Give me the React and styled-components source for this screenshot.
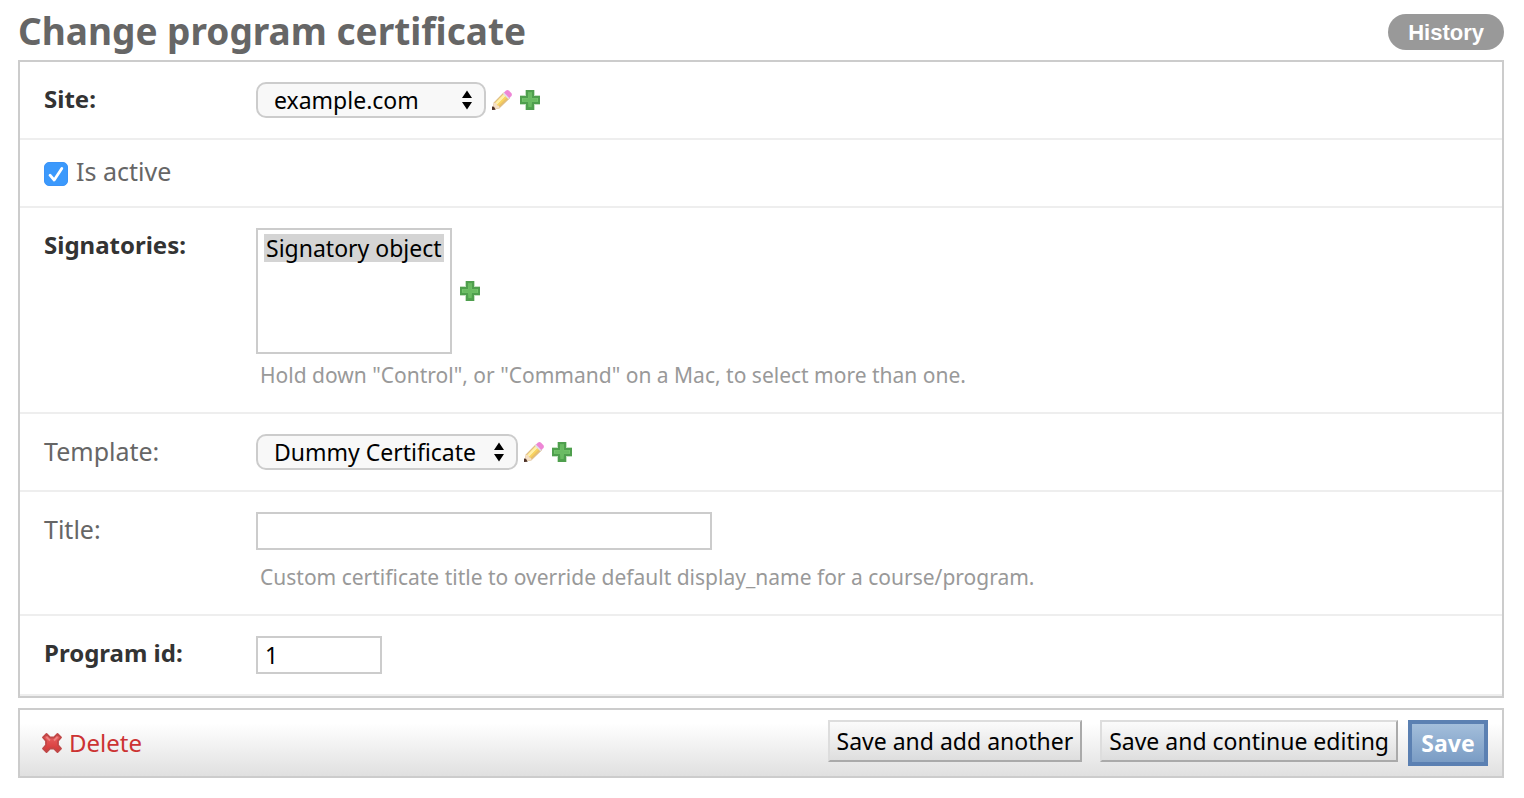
import React, { useState } from "react";
import styled, { createGlobalStyle, css } from "styled-components";

const GlobalStyle = createGlobalStyle`
  *, *::before, *::after { box-sizing: border-box; }
  body {
    margin: 0;
    background: #fff;
    color: #333;
    font-family: "Noto Sans", "Open Sans", sans-serif;
    font-size: 24px;
  }
  button, input, select { font-family: inherit; margin: 0; }
`;

const Page = styled.main`
  padding: 0 20px 20px 18px;
`;

const Header = styled.header`
  display: flex;
  justify-content: space-between;
  align-items: flex-start;
  height: 60px;
`;

const Heading = styled.h1`
  margin: 0;
  padding-top: 6px;
  font-size: 37px;
  line-height: 50px;
  font-weight: 700;
  color: #666;
`;

const HistoryLink = styled.a`
  margin-top: 14px;
  padding: 1px 20px 0;
  border-radius: 18px;
  background: #999;
  color: #fff;
  font-family: "Liberation Sans", Arial, sans-serif;
  font-size: 22px;
  line-height: 35px;
  font-weight: 700;
  text-decoration: none;
`;

const Module = styled.fieldset`
  margin: 0 0 10px;
  padding: 0;
  min-width: 0;
  border: 2px solid #ccc;
`;

const Row = styled.div`
  display: flex;
  align-items: flex-start;
  padding: 20px 24px;
  border-bottom: 2px solid #eee;
`;

const Label = styled.label`
  flex: 0 0 212px;
  font-size: ${(p) => (p.$required ? 24 : 25)}px;
  line-height: 34px;
  font-weight: ${(p) => (p.$required ? 700 : 400)};
  color: ${(p) => (p.$required ? "#333" : "#666")};
`;

const Field = styled.div`
  flex: 1;
  min-width: 0;
`;

const Controls = styled.div`
  display: flex;
  align-items: center;
`;

const IconLink = styled.a`
  display: block;
  width: 20px;
  height: 20px;
  margin-left: ${(p) => (p.$tight ? "6px" : "8px")};

  svg { display: block; }
`;

const Help = styled.p`
  margin: ${(p) => (p.$spaced ? "12px" : "6px")} 0 0;
  padding: 0 0 2px 4px;
  font-size: 21px;
  line-height: 30px;
  color: #999;
`;

const SelectBox = styled.div`
  position: relative;
  width: ${(p) => p.$width}px;

  svg {
    position: absolute;
    right: 13px;
    top: 8px;
    pointer-events: none;
  }
`;

const Select = styled.select`
  appearance: none;
  display: block;
  width: 100%;
  height: 36px;
  padding: 0 32px 0 16px;
  border: 2px solid #ccc;
  border-radius: 10px;
  background: #f8f8f8;
  color: #000;
  font-size: 23px;
  line-height: 32px;
`;

const ListBox = styled.select`
  display: block;
  width: 196px;
  height: 126px;
  padding: 4px 6px;
  border: 2px solid #ccc;
  border-radius: 0;
  background: #fff;
  font-size: 23px;
  overflow: hidden;
  outline: none;

  option {
    display: flex;
    align-items: center;
    height: 28px;
    min-height: 28px;
    padding: 0 2px;
    line-height: 28px;
    color: #000;
  }
  option:checked {
    background: #d4d4d4 linear-gradient(#d4d4d4, #d4d4d4);
    color: #000;
  }
`;

const TextInput = styled.input`
  display: block;
  width: ${(p) => p.$width}px;
  height: 38px;
  padding: 0 7px;
  border: 2px solid #ccc;
  border-radius: 0;
  background: #fff;
  color: #000;
  font-size: 23px;
`;

const CheckLabel = styled.label`
  display: flex;
  align-items: flex-start;
  gap: 8px;
  font-size: 25px;
  line-height: 22px;
  color: #666;
`;

const CheckBox = styled.span`
  position: relative;
  width: 24px;
  height: 24px;
  margin-top: 2px;

  input {
    appearance: none;
    display: block;
    width: 24px;
    height: 24px;
    border: 1px solid #bbb;
    border-radius: 5px;
    background: #fff;
  }
  input:checked {
    border-color: #3b93f7;
    background: #3b99fc;
  }
  svg {
    position: absolute;
    inset: 0;
    pointer-events: none;
  }
  input:not(:checked) + svg { display: none; }
`;

const SubmitRow = styled.div`
  display: flex;
  align-items: flex-start;
  padding: 10px 14px 10px 22px;
  border: 2px solid #ccc;
  background: linear-gradient(#fff 20%, #e0e0e0);
`;

const DeleteLink = styled.a`
  display: flex;
  align-items: center;
  gap: 7px;
  margin-right: auto;
  font-size: 24px;
  line-height: 46px;
  color: #cc3333;
  text-decoration: none;
`;

const Button = styled.button`
  padding: 0 7px;
  height: 42px;
  border: 2px solid;
  border-color: #ddd #aaa #aaa #ddd;
  border-radius: 0;
  background: linear-gradient(#fbfbfb, #dedede);
  color: #000;
  font-size: 23px;
  white-space: nowrap;
  margin-left: 18px;

  ${(p) =>
    p.$primary &&
    css`
      min-width: 80px;
      height: 46px;
      margin-left: 10px;
      padding: 0 9px;
      border: 4px solid #5b80b2;
      background: linear-gradient(#a3bedb, #7a9cc4);
      color: #fff;
      font-weight: 700;
    `}
`;

const Arrows = () => (
  <svg width="12" height="20" viewBox="0 0 12 20" aria-hidden="true">
    <path d="M6 0.500 11 8H1ZM6 19.500 1 12h10Z" fill="#000" />
  </svg>
);

const PlusIcon = () => (
  <svg width="20" height="20" viewBox="0 0 20 20" aria-hidden="true">
    <defs>
      <linearGradient id="plusFill" x1="0" y1="0" x2="0" y2="1">
        <stop offset="0" stopColor="#62b55c" />
        <stop offset=".5" stopColor="#76c76e" />
        <stop offset="1" stopColor="#479f45" />
      </linearGradient>
    </defs>
    <path d="M5 0H15V5H20V15H15V20H5V15H0V5H5Z" fill="#c4e2c2" />
    <path d="M7 1H13V7H19V13H13V19H7V13H1V7H7Z" fill="url(#plusFill)" stroke="#4f9f4e" strokeWidth="2" />
    <path d="M10 3V17M3 10H17" stroke="#6abb63" strokeWidth="3" />
  </svg>
);

const PencilIcon = () => (
  <svg width="20" height="20" viewBox="0 0 20 20" aria-hidden="true">
    <path d="M1 19 2.200 12.500 12 2.500 17.700 8 7.300 18Z" fill="#e9c06a" stroke="#d3b286" strokeWidth=".8" />
    <path d="M3 13 12.300 3.500 14.300 5.500 5 15Z" fill="#fff0a8" />
    <path d="M5 15 14.300 5.500 15.500 6.700 6 16.300Z" fill="#fad55e" />
    <path d="M.500 19.500 2 12.700 4.200 13.300 5.200 15.200 7.100 16 7.600 18Z" fill="#f5dfc5" />
    <path d="M0 20V16.500L2 16.700 3.700 19.700Z" fill="#4b3026" />
    <path d="M10.800 3.800 13 1.700 18.500 7.200 16.300 9.200Z" fill="#e0dfe8" />
    <path d="M12 2.500 14 .500Q15.500-.300 16.800.400L19.500 3.200Q20.300 4.600 19.500 6L17.300 8Z" fill="#ee86d6" />
  </svg>
);

const DeleteIcon = () => (
  <svg width="20" height="20" viewBox="0 0 20 20" aria-hidden="true">
    <defs>
      <linearGradient id="crossFill" x1="0" y1="0" x2="0" y2="1">
        <stop offset="0" stopColor="#ea6464" />
        <stop offset="1" stopColor="#d43434" />
      </linearGradient>
    </defs>
    <path
      d="M4.500 1 8 4.500H12L15.500 1 19 4.500 16 8V12L19 15.500 15.500 19 12 15.500H8L4.500 19 1 15.500 4 12V8L1 4.500Z"
      fill="url(#crossFill)"
      stroke="#c04848"
      strokeWidth="1.800"
      strokeLinejoin="round"
    />
    <path d="M4.500 4 8 7.500M15.500 4 12 7.500" stroke="#ee8080" strokeWidth="1.800" />
  </svg>
);

const CheckIcon = () => (
  <svg width="24" height="24" viewBox="0 0 24 24" aria-hidden="true">
    <path d="M6 13.200 10.200 18 17.800 6.500" fill="none" stroke="#fff" strokeWidth="2.800" strokeLinecap="round" strokeLinejoin="round" />
  </svg>
);

function RelatedSelect({ id, width, option, name }) {
  return (
    <Controls>
      <SelectBox $width={width}>
        <Select id={id} defaultValue={option}>
          <option>{option}</option>
        </Select>
        <Arrows />
      </SelectBox>
      <IconLink $tight href="#change" aria-label={`Change ${name}`}>
        <PencilIcon />
      </IconLink>
      <IconLink href="#add" aria-label={`Add ${name}`}>
        <PlusIcon />
      </IconLink>
    </Controls>
  );
}

export default function App() {
  const [active, setActive] = useState(true);

  return (
    <>
      <GlobalStyle />
      <Page>
        <Header>
          <Heading>Change program certificate</Heading>
          <HistoryLink href="#history">History</HistoryLink>
        </Header>
        <form onSubmit={(e) => e.preventDefault()}>
          <Module>
            <Row>
              <Label htmlFor="site" $required>Site:</Label>
              <Field>
                <RelatedSelect id="site" width={230} option="example.com" name="site" />
              </Field>
            </Row>
            <Row>
              <CheckLabel>
                <CheckBox>
                  <input type="checkbox" checked={active} onChange={(e) => setActive(e.target.checked)} />
                  <CheckIcon />
                </CheckBox>
                Is active
              </CheckLabel>
            </Row>
            <Row>
              <Label htmlFor="signatories" $required>Signatories:</Label>
              <Field>
                <Controls>
                  <ListBox id="signatories" multiple size={4} defaultValue={["1"]}>
                    <option value="1">Signatory object</option>
                  </ListBox>
                  <IconLink href="#add" aria-label="Add signatory">
                    <PlusIcon />
                  </IconLink>
                </Controls>
                <Help>Hold down "Control", or "Command" on a Mac, to select more than one.</Help>
              </Field>
            </Row>
            <Row>
              <Label htmlFor="template">Template:</Label>
              <Field>
                <RelatedSelect id="template" width={262} option="Dummy Certificate" name="template" />
              </Field>
            </Row>
            <Row>
              <Label htmlFor="title">Title:</Label>
              <Field>
                <TextInput id="title" type="text" $width={456} />
                <Help $spaced>Custom certificate title to override default display_name for a course/program.</Help>
              </Field>
            </Row>
            <Row>
              <Label htmlFor="program" $required>Program id:</Label>
              <Field>
                <TextInput id="program" type="text" defaultValue="1" $width={126} />
              </Field>
            </Row>
          </Module>
          <SubmitRow>
            <DeleteLink href="#delete">
              <DeleteIcon />
              Delete
            </DeleteLink>
            <Button type="submit">Save and add another</Button>
            <Button type="submit">Save and continue editing</Button>
            <Button type="submit" $primary>Save</Button>
          </SubmitRow>
        </form>
      </Page>
    </>
  );
}
